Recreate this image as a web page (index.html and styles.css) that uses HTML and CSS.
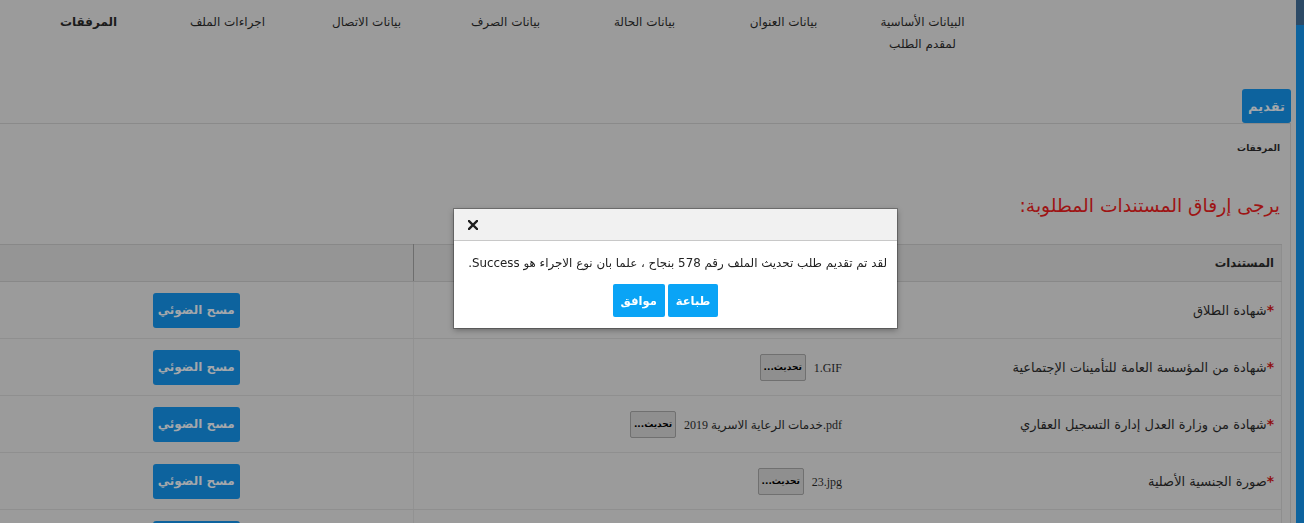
FILE: index.html
```html
<!DOCTYPE html>
<html lang="ar" dir="rtl">
<head>
<meta charset="utf-8">
<title>المرفقات</title>
<link rel="stylesheet" href="styles.css">
</head>
<body>
<div class="page">
  <aside class="edge"></aside>
  <main class="main">
    <nav class="steps">
      <div class="step">البيانات الأساسية لمقدم الطلب</div>
      <div class="step">بيانات العنوان</div>
      <div class="step">بيانات الحالة</div>
      <div class="step">بيانات الصرف</div>
      <div class="step">بيانات الاتصال</div>
      <div class="step">اجراءات الملف</div>
      <div class="step active">المرفقات</div>
    </nav>
    <div class="tabs"><button class="tab">تقديم</button></div>
    <section class="panel">
      <div class="panel-title">المرفقات</div>
      <h2 class="heading">يرجى إرفاق المستندات المطلوبة:</h2>
      <table class="docs">
        <colgroup><col class="c-doc"><col class="c-file"><col class="c-act"></colgroup>
        <thead>
          <tr><th colspan="2">المستندات</th><th class="th-act"></th></tr>
        </thead>
        <tbody>
          <tr>
            <td class="doc"><span class="req">*</span>شهادة الطلاق</td>
            <td class="file"></td>
            <td class="act"><button class="scan">مسح الضوئي</button></td>
          </tr>
          <tr>
            <td class="doc"><span class="req">*</span>شهادة من المؤسسة العامة للتأمينات الإجتماعية</td>
            <td class="file"><span class="fname" dir="ltr">1.GIF</span><button class="upd">تحديث...</button></td>
            <td class="act"><button class="scan">مسح الضوئي</button></td>
          </tr>
          <tr>
            <td class="doc"><span class="req">*</span>شهادة من وزارة العدل إدارة التسجيل العقاري</td>
            <td class="file"><span class="fname" dir="ltr">خدمات الرعاية الاسرية 2019.pdf</span><button class="upd">تحديث...</button></td>
            <td class="act"><button class="scan">مسح الضوئي</button></td>
          </tr>
          <tr>
            <td class="doc"><span class="req">*</span>صورة الجنسية الأصلية</td>
            <td class="file"><span class="fname" dir="ltr">23.jpg</span><button class="upd">تحديث...</button></td>
            <td class="act"><button class="scan">مسح الضوئي</button></td>
          </tr>
          <tr>
            <td class="doc"></td>
            <td class="file"></td>
            <td class="act"><button class="scan">مسح الضوئي</button></td>
          </tr>
        </tbody>
      </table>
    </section>
  </main>
</div>

<div class="modal" role="dialog">
  <div class="modal-head">
    <button class="close" aria-label="إغلاق">
      <svg width="10" height="10" viewBox="0 0 10 10"><path d="M1 1 L9 9 M9 1 L1 9" stroke="#1e1e1e" stroke-width="2.4" stroke-linecap="square"/></svg>
    </button>
  </div>
  <div class="modal-body">
    <p class="msg">لقد تم تقديم طلب تحديث الملف رقم 578 بنجاح ، علما بان نوع الاجراء هو Success.</p>
    <div class="actions">
      <button class="mbtn">طباعة</button>
      <button class="mbtn">موافق</button>
    </div>
  </div>
</div>
</body>
</html>
```

FILE: styles.css
```css
html, body {
  margin: 0;
  padding: 0;
  height: 100%;
  overflow: hidden;
}
body {
  background: #9b9b9b;
  color: #1b1b1b;
  font-family: "DejaVu Sans", sans-serif;
}
button {
  font-family: inherit;
  cursor: pointer;
}

.page {
  display: flex;
  min-height: 523px;
}
.edge {
  width: 8px;
  flex: none;
  background: linear-gradient(#2c4a66 0, #2c4a66 25px, #0d639e 25px);
}
.main {
  flex: 1;
  padding-right: 5px;
  min-width: 0;
}

/* steps nav */
.steps {
  display: flex;
  height: 89px;
  box-sizing: border-box;
  padding-top: 11px;
  margin-right: 299px;
}
.step {
  width: 139px;
  flex: none;
  box-sizing: border-box;
  padding: 0 12px;
  text-align: center;
  font-size: 12px;
  line-height: 22px;
}
.step.active {
  font-weight: bold;
  font-size: 12px;
}

/* tab */
.tabs {
  display: flex;
  height: 34px;
}
.tab {
  width: 49px;
  height: 34px;
  border: 0;
  border-radius: 3px;
  background: #0d639e;
  color: #a3a7ab;
  font-weight: bold;
  font-size: 13px;
  padding: 0;
}

/* panel */
.panel {
  border-top: 1px solid #8a8a8a;
  border-right: 1px solid #8a8a8a;
  padding: 16px 8px 0 0;
}
.panel-title {
  font-size: 9px;
  font-weight: bold;
  line-height: 16px;
  padding-right: 2px;
}
.heading {
  margin: 36px 0 24px;
  padding-right: 2px;
  font-size: 18.7px;
  font-weight: normal;
  line-height: 28px;
  color: #9e1414;
}

/* table */
.docs {
  width: 100%;
  border-collapse: collapse;
  table-layout: fixed;
  border-top: 1px solid #888;
  border-right: 1px solid #8e8e8e;
}
.c-file { width: 442px; }
.c-act { width: 413px; }
.docs th {
  height: 36px;
  padding: 0 7px;
  text-align: right;
  background: #959595;
  font-size: 11.5px;
  font-weight: bold;
  border-bottom: 1px solid #888;
}
.docs th.th-act {
  border-right: 1px solid #6e6e6e;
}
.docs td {
  height: 56px;
  padding: 0;
  border-bottom: 1px solid #8f8f8f;
  vertical-align: middle;
}
.docs td.doc {
  padding-right: 7px;
  font-size: 13px;
}
.req {
  color: #8e1010;
  font-weight: bold;
  font-size: 14px;
}
.docs td.file {
  padding-right: 13px;
}
.fname {
  font-family: "Liberation Serif", "DejaVu Sans", serif;
  font-size: 12px;
  unicode-bidi: isolate;
}
.upd {
  margin-right: 8px;
  width: 46px;
  height: 27px;
  padding: 0;
  background: #8f8f8f;
  border: 1px solid #707070;
  border-radius: 2px;
  font-size: 9px;
  font-weight: bold;
  color: #000;
  vertical-align: middle;
}
.docs td.act {
  border-right: 1px solid #929292;
  text-align: center;
  padding-right: 20px;
}
.scan {
  width: 87px;
  height: 35px;
  border: 0;
  border-radius: 3px;
  padding: 0;
  background: #0d639e;
  color: #a3a7ab;
  font-size: 12px;
  font-weight: bold;
}

/* modal */
.modal {
  position: fixed;
  left: 454px;
  top: 209px;
  width: 443px;
  background: #fff;
  box-shadow: 0 0 0 1px rgba(0, 0, 0, .25), 0 2px 6px rgba(0, 0, 0, .35);
}
.modal-head {
  height: 31px;
  background: #f1f1f1;
  border-bottom: 1px solid #c8c8c8;
  display: flex;
  align-items: center;
  justify-content: flex-end;
  padding-left: 14px;
}
.close {
  border: 0;
  background: none;
  padding: 0;
  display: flex;
}
.modal-body {
  padding: 13px 10px 11px;
}
.msg {
  margin: 0;
  font-size: 11.85px;
  line-height: 18px;
  color: #222;
  white-space: nowrap;
}
.actions {
  display: flex;
  justify-content: center;
  gap: 3px;
  margin-top: 12px;
  margin-right: 20px;
}
.mbtn {
  height: 33px;
  padding: 0 8px;
  border: 0;
  border-radius: 2px;
  background: #0aa4f6;
  color: #fff;
  font-size: 11.5px;
  font-weight: bold;
}
```
